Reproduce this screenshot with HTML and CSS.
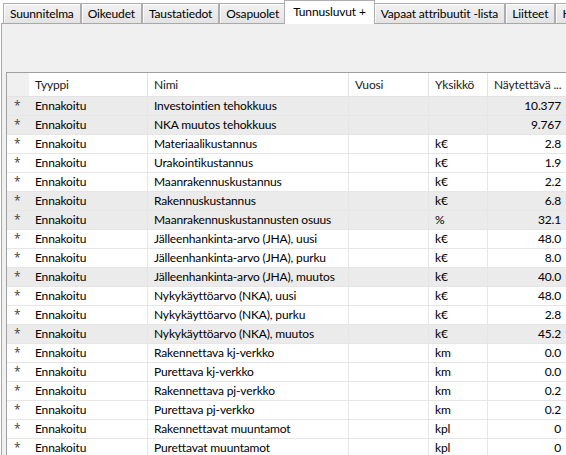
FILE: index.html
```html
<!DOCTYPE html>
<html>
<head>
<meta charset="utf-8">
<link rel="stylesheet" href="styles.css">
</head>
<body>
<div class="tabs">
  <div class="tab">Suunnitelma</div>
  <div class="tab">Oikeudet</div>
  <div class="tab">Taustatiedot</div>
  <div class="tab">Osapuolet</div>
  <div class="tab active">Tunnusluvut +</div>
  <div class="tab">Vapaat attribuutit -lista</div>
  <div class="tab">Liitteet</div>
  <div class="tab">Historia</div>
</div>
<div class="panel">
  <div class="grid">
    <table>
      <colgroup>
        <col class="c-ind"><col class="c-type"><col class="c-name"><col class="c-year"><col class="c-unit"><col class="c-val">
      </colgroup>
      <thead>
        <tr><th class="ind"></th><th>Tyyppi</th><th>Nimi</th><th>Vuosi</th><th>Yksikkö</th><th>Näytettävä ...</th></tr>
      </thead>
      <tbody>
        <tr class="ro"><td class="ind">*</td><td>Ennakoitu</td><td>Investointien tehokkuus</td><td></td><td></td><td class="num">10.377</td></tr>
        <tr class="ro"><td class="ind">*</td><td>Ennakoitu</td><td>NKA muutos tehokkuus</td><td></td><td></td><td class="num">9.767</td></tr>
        <tr><td class="ind">*</td><td>Ennakoitu</td><td>Materiaalikustannus</td><td></td><td>k€</td><td class="num">2.8</td></tr>
        <tr><td class="ind">*</td><td>Ennakoitu</td><td>Urakointikustannus</td><td></td><td>k€</td><td class="num">1.9</td></tr>
        <tr><td class="ind">*</td><td>Ennakoitu</td><td>Maanrakennuskustannus</td><td></td><td>k€</td><td class="num">2.2</td></tr>
        <tr class="ro"><td class="ind">*</td><td>Ennakoitu</td><td>Rakennuskustannus</td><td></td><td>k€</td><td class="num">6.8</td></tr>
        <tr class="ro"><td class="ind">*</td><td>Ennakoitu</td><td>Maanrakennuskustannusten osuus</td><td></td><td>%</td><td class="num">32.1</td></tr>
        <tr><td class="ind">*</td><td>Ennakoitu</td><td>Jälleenhankinta-arvo (JHA), uusi</td><td></td><td>k€</td><td class="num">48.0</td></tr>
        <tr><td class="ind">*</td><td>Ennakoitu</td><td>Jälleenhankinta-arvo (JHA), purku</td><td></td><td>k€</td><td class="num">8.0</td></tr>
        <tr class="ro"><td class="ind">*</td><td>Ennakoitu</td><td>Jälleenhankinta-arvo (JHA), muutos</td><td></td><td>k€</td><td class="num">40.0</td></tr>
        <tr><td class="ind">*</td><td>Ennakoitu</td><td>Nykykäyttöarvo (NKA), uusi</td><td></td><td>k€</td><td class="num">48.0</td></tr>
        <tr><td class="ind">*</td><td>Ennakoitu</td><td>Nykykäyttöarvo (NKA), purku</td><td></td><td>k€</td><td class="num">2.8</td></tr>
        <tr class="ro"><td class="ind">*</td><td>Ennakoitu</td><td>Nykykäyttöarvo (NKA), muutos</td><td></td><td>k€</td><td class="num">45.2</td></tr>
        <tr><td class="ind">*</td><td>Ennakoitu</td><td>Rakennettava kj-verkko</td><td></td><td>km</td><td class="num">0.0</td></tr>
        <tr><td class="ind">*</td><td>Ennakoitu</td><td>Purettava kj-verkko</td><td></td><td>km</td><td class="num">0.0</td></tr>
        <tr><td class="ind">*</td><td>Ennakoitu</td><td>Rakennettava pj-verkko</td><td></td><td>km</td><td class="num">0.2</td></tr>
        <tr><td class="ind">*</td><td>Ennakoitu</td><td>Purettava pj-verkko</td><td></td><td>km</td><td class="num">0.2</td></tr>
        <tr><td class="ind">*</td><td>Ennakoitu</td><td>Rakennettavat muuntamot</td><td></td><td>kpl</td><td class="num">0</td></tr>
        <tr><td class="ind">*</td><td>Ennakoitu</td><td>Purettavat muuntamot</td><td></td><td>kpl</td><td class="num">0</td></tr>
      </tbody>
    </table>
  </div>
</div>
</body>
</html>
```

FILE: styles.css
```css
html, body {
  margin: 0;
  padding: 0;
  background: #ffffff;
  overflow: hidden;
  width: 566px;
  height: 455px;
}
body {
  font-family: "Lato", "Open Sans", sans-serif;
  font-size: 12px;
  letter-spacing: -0.15px;
  color: #000;
}
.tabs {
  display: flex;
  align-items: flex-end;
  height: 23px;
  padding-left: 3px;
  white-space: nowrap;
  position: relative;
  z-index: 2;
}
.tab {
  flex: none;
  height: 20px;
  line-height: 19px;
  padding: 0 6px;
  border: 1px solid #adadad;
  border-bottom: none;
  background: linear-gradient(#f2f2f2, #e3e3e3);
  box-shadow: inset 1px 1px 0 #fcfcfc;
  box-sizing: border-box;
  color: #000;
}
.tab.active {
  height: 24px;
  line-height: 22px;
  margin: 0 -1px -1px -2px;
  padding: 0 8px;
  background: #ffffff;
  box-shadow: none;
  position: relative;
}
.panel {
  border-top: 1px solid #a8a8a8;
  border-left: 1px solid #a8a8a8;
  margin-left: 1px;
  background: #f0f0f0;
  padding: 48px 0 0 4px;
  height: 500px;
}
.grid {
  border-top: 1px solid #a0a0a0;
  border-left: 1px solid #a0a0a0;
  background: #ffffff;
  width: 600px;
}
table {
  border-collapse: separate;
  border-spacing: 0;
  table-layout: fixed;
  width: 561px;
}
.c-ind { width: 22px; }
.c-type { width: 119px; }
.c-name { width: 201px; }
.c-year { width: 80px; }
.c-unit { width: 59px; }
.c-val { width: 80px; }
th, td {
  padding: 0 0 0 6px;
  text-align: left;
  font-weight: normal;
  white-space: nowrap;
  overflow: hidden;
  box-sizing: content-box;
}
th {
  height: 23px;
  line-height: 23px;
  background: #ffffff;
  border-bottom: 1px solid #e3e3e3;
  border-right: 1px solid #e3e3e3;
  color: #1a1a1a;
}
th.ind {
  background: #f0f0f0;
  border-right: none;
}
td {
  height: 18px;
  line-height: 18px;
  border-bottom: 1px solid #e6e6e6;
  border-right: 1px solid #e6e6e6;
}
td.ind {
  border-right: none;
  padding-left: 7px;
  font-family: "Open Sans", sans-serif;
  font-size: 12px;
  vertical-align: top;
  line-height: 17px;
  color: #444;
}
tr.ro td { background: #ebebeb; }
td.num {
  text-align: right;
  padding: 0 6px 0 0;
}
```
